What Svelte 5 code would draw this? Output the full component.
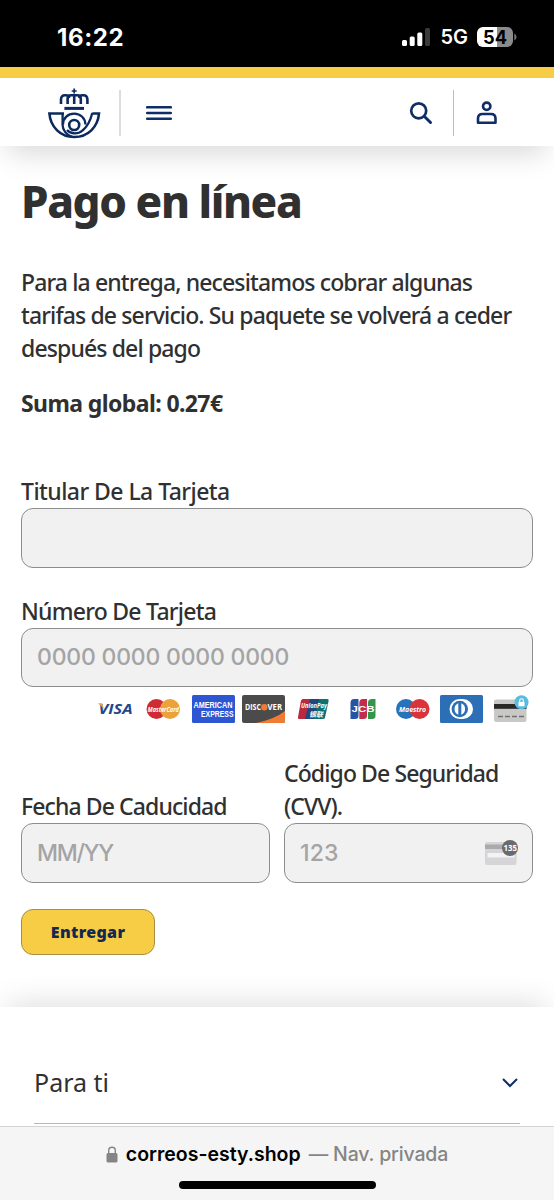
<script>
	const fields = [
		{ id: 'holder', label: 'Titular De La Tarjeta', hint: '' },
		{ id: 'number', label: 'Número De Tarjeta', hint: '0000 0000 0000 0000' }
	];

	const bars = [
		{ x: 0, y: 12, h: 6, on: true },
		{ x: 7.7, y: 8.5, h: 9.5, on: true },
		{ x: 15.3, y: 4.5, h: 13.5, on: true },
		{ x: 23, y: 0, h: 18, on: false }
	];
</script>

<div class="screen">
	<div class="status-bar">
		<span class="clock">16:22</span>
		<div class="status-right">
			<svg class="signal" width="28" height="18" viewBox="0 0 28 18">
				{#each bars as bar}
					<rect x={bar.x} y={bar.y} width="5" height={bar.h} rx="1.5" fill={bar.on ? '#fff' : '#3a3a3a'} />
				{/each}
			</svg>
			<span class="network">5G</span>
			<svg width="40" height="20" viewBox="0 0 40 20">
				<path d="M6 0H20V20H6A6 6 0 0 1 0 14V6A6 6 0 0 1 6 0Z" fill="#fff" />
				<path d="M20 0H30A6 6 0 0 1 36 6V14A6 6 0 0 1 30 20H20Z" fill="#8b8b8b" />
				<path d="M37.3 6.5Q39.5 7.5 39.5 10T37.3 13.5Z" fill="#777" />
				<text x="18" y="16.6" text-anchor="middle" textLength="24" lengthAdjust="spacingAndGlyphs" font-family="Inter" font-size="18.5" font-weight="700">54</text>
			</svg>
		</div>
	</div>

	<header class="header">
		<svg class="logo" width="54" height="52" viewBox="0 0 54 52" fill="none" stroke="#0c2a5e" stroke-width="2.6">
			<path d="M27.200 1.500V6.500M24.700 4H29.700" stroke-width="1.700" />
			<path d="M14 17V12.500Q14 8.200 18 8.200H19Q22 8.200 22 11M40.400 17V12.500Q40.400 8.200 36.400 8.200H35.400Q32.400 8.200 32.400 11" />
			<path d="M20.600 17V12Q20.600 8.200 24 8.200H30.400Q33.800 8.200 33.800 12V17M27.200 8V17" />
			<path d="M17.400 21.400H37" stroke-width="3" />
			<path d="M17 26.500H2.400C3.500 40 13.500 50 27.200 50C41 50 50.900 40 52 26.500H45.300" />
			<path d="M15.600 26V38C15.600 43 19.500 48 25 49.800" stroke-width="2.300" />
			<path d="M16 37.500C16 31 21 26.600 27.200 26.600C33.500 26.600 38.400 31.500 38.400 37.500" stroke-width="2.300" />
			<circle cx="27.200" cy="38" r="5" />
			<path d="M20 43C24 47.500 31 47.500 35.500 43.500C41 39 43.500 33.500 45.300 26" stroke-width="2.300" />
		</svg>
		<span class="divider divider-wide"></span>
		<svg class="burger" width="26" height="16" viewBox="0 0 26 16">
			<path d="M1.200 2.300H24.800M1.200 8H24.800M1.200 13.700H24.800" stroke="#0f2d69" stroke-width="2.600" stroke-linecap="round" />
		</svg>
		<svg class="search" width="24" height="24" viewBox="0 0 24 24" fill="none" stroke="#0f2d69" stroke-width="2.700">
			<circle cx="9.700" cy="9.800" r="7.500" />
			<path d="M15.200 15.300L21.500 21.500" stroke-width="3" stroke-linecap="round" />
		</svg>
		<span class="divider"></span>
		<svg class="user" width="22" height="24" viewBox="0 0 22 24" fill="none" stroke="#0f2d69" stroke-width="2.600">
			<circle cx="10.700" cy="5.300" r="3.700" />
			<path d="M2 21.800V17.500Q2 13 6.500 13H15Q19.500 13 19.500 17.500V21.800Z" stroke-linejoin="round" />
		</svg>
	</header>

	<main class="content">
		<h1>Pago en línea</h1>
		<p class="intro">
			Para la entrega, necesitamos cobrar algunas<br />
			tarifas de servicio. Su paquete se volverá a ceder<br />
			después del pago
		</p>
		<p class="total">Suma global: 0.27€</p>

		{#each fields as field}
			<div class="field {field.id}">
				<span class="label">{field.label}</span>
				<div class="box"><span class="hint">{field.hint}</span></div>
			</div>
		{/each}

		<div class="cards">
			<svg viewBox="0 0 43 28">
				<text x="5.500" y="19.300" textLength="34" lengthAdjust="spacingAndGlyphs" font-family="Open Sans" font-size="15" font-weight="700" font-style="italic" fill="#24468b">VISA</text>
				<path d="M5 8.300H9L11 14Z" fill="#e5a63a" />
			</svg>
			<svg viewBox="0 0 43 28">
				<circle cx="14.500" cy="14" r="10" fill="#cf2b32" />
				<circle cx="28" cy="14" r="10" fill="#eda13b" />
				<text x="21.300" y="16.700" text-anchor="middle" textLength="31" lengthAdjust="spacingAndGlyphs" class="brand">MasterCard</text>
			</svg>
			<svg viewBox="0 0 43 28">
				<rect width="43" height="28" rx="1.500" fill="#2c56d2" />
				<g font-family="Liberation Sans" font-size="9" font-weight="700" fill="#fff">
					<text x="1.500" y="13" textLength="39" lengthAdjust="spacingAndGlyphs">AMERICAN</text>
					<text x="9" y="21.500" textLength="32.500" lengthAdjust="spacingAndGlyphs">EXPRESS</text>
				</g>
			</svg>
			<svg viewBox="0 0 43 28">
				<rect width="43" height="28" rx="2" fill="#4b4b4b" />
				<path d="M14 28Q33 24 43 16V26Q43 28 41 28Z" fill="#ef7b35" />
				<g font-family="Open Sans" font-size="8" font-weight="700" fill="#fff">
					<text x="3" y="15.200" textLength="16" lengthAdjust="spacingAndGlyphs">DISC</text>
					<text x="25.500" y="15.200" textLength="14.500" lengthAdjust="spacingAndGlyphs">VER</text>
				</g>
				<circle cx="22.300" cy="12.300" r="3.200" fill="#ef7b35" />
			</svg>
			<svg viewBox="0 0 43 28">
				<path d="M11.500 4H20L15 24H8Q6.500 24 7 22L10 5.500Z" fill="#b92940" />
				<path d="M19 4H29L24 24H14Z" fill="#21477d" />
				<path d="M28 4H36.500Q38 4 37.600 6L34 22.500Q33.600 24 32 24H23Z" fill="#10706f" />
				<text x="23" y="12.500" text-anchor="middle" textLength="26" lengthAdjust="spacingAndGlyphs" class="brand">UnionPay</text>
				<text x="25" y="21.500" text-anchor="middle" textLength="14" lengthAdjust="spacingAndGlyphs" font-family="Noto Sans CJK SC" font-size="7" font-weight="700" font-style="italic" fill="#fff">银联</text>
			</svg>
			<svg viewBox="0 0 43 28">
				<path d="M13 4H17.500V21Q17.500 24 14 24H9.500V8Q9.500 4 13 4Z" fill="#2854a5" />
				<path d="M22 4H26V21Q26 24 22.500 24H18.300V8Q18.300 4 22 4Z" fill="#c32c4a" />
				<path d="M31 4H34.500V21Q34.500 24 31 24H27V8Q27 4 31 4Z" fill="#34964a" />
				<text x="10.500" y="17.300" textLength="23" lengthAdjust="spacingAndGlyphs" font-family="Liberation Sans" font-size="9.500" font-weight="700" fill="#fff">JCB</text>
			</svg>
			<svg viewBox="0 0 43 28">
				<circle cx="15" cy="14" r="10" fill="#2673bb" />
				<circle cx="28.500" cy="14" r="10" fill="#d8343a" />
				<text x="21.500" y="16.500" text-anchor="middle" textLength="27" lengthAdjust="spacingAndGlyphs" class="brand">Maestro</text>
			</svg>
			<svg viewBox="0 0 43 28">
				<rect width="43" height="28" rx="1.500" fill="#2c6fb7" />
				<path d="M19.500 4H23A10 10 0 0 1 23 24H19.500A10 10 0 0 1 19.500 4Z" fill="#fff" />
				<circle cx="19.800" cy="14" r="8.200" fill="#2c6fb7" />
				<path d="M18.300 8.300A6.200 6.200 0 0 0 18.300 19.700ZM21.300 8.300A6.200 6.200 0 0 1 21.300 19.700Z" fill="#fff" />
			</svg>
			<svg viewBox="0 0 43 28">
				<rect x="4" y="4.500" width="32.500" height="22.500" rx="2" fill="#c8c8c6" />
				<rect x="4" y="9" width="32.500" height="4.800" fill="#292929" />
				<path d="M8 21.500H13M15 21.500H20M22 21.500H27M29 21.500H34" stroke="#707070" stroke-width="1.300" />
				<circle cx="31.500" cy="7.300" r="7" fill="#58bce0" />
				<rect x="28.500" y="7" width="6" height="4.200" rx=".5" fill="#fff" />
				<path d="M29.700 7V5.500A1.800 1.800 0 0 1 33.300 5.500V7" fill="none" stroke="#fff" stroke-width="1.100" />
			</svg>
		</div>

		<div class="pair">
			<div class="field expiry">
				<span class="label">Fecha De Caducidad</span>
				<div class="box"><span class="hint">MM/YY</span></div>
			</div>
			<div class="field code">
				<span class="label">Código De Seguridad<br />(CVV).</span>
				<div class="box">
					<span class="hint">123</span>
					<svg class="cvv" width="34" height="28" viewBox="0 0 34 28">
						<rect y="3" width="31.500" height="23" rx="2" fill="#d5d5d7" />
						<rect y="5.500" width="31.500" height="4.500" fill="#aaaaad" />
						<rect x="2.500" y="14" width="27" height="4.500" fill="#f3f3f3" />
						<circle cx="25" cy="9" r="8" fill="#6b6a70" />
						<text x="25.300" y="12.200" text-anchor="middle" textLength="13.500" lengthAdjust="spacingAndGlyphs" font-family="Noto Sans" font-size="9" font-weight="700" fill="#fff">135</text>
					</svg>
				</div>
			</div>
		</div>

		<div class="submit">Entregar</div>
	</main>

	<footer class="footer">
		<div class="accordion">
			<span>Para ti</span>
			<svg width="18" height="12" viewBox="0 0 18 12">
				<path d="M2 2L9 9L16 2" fill="none" stroke="#0f2d69" stroke-width="2" />
			</svg>
		</div>
	</footer>

	<div class="browser-bar">
		<div class="address">
			<svg width="12" height="17" viewBox="0 0 12 17">
				<rect x=".5" y="7" width="11" height="9.500" rx="1.500" fill="#858585" />
				<path d="M2.700 8V4.500A3.300 3.300 0 0 1 9.300 4.500V8" fill="none" stroke="#858585" stroke-width="1.400" />
			</svg>
			<span class="host">correos-esty.shop</span>
			<span class="mode">— Nav. privada</span>
		</div>
		<div class="home-indicator"></div>
	</div>
</div>

<style>
	:global(body) {
		margin: 0;
	}

	.screen {
		width: 554px;
		height: 1200px;
		display: flex;
		flex-direction: column;
		overflow: hidden;
		background: #fff;
		color: #303030;
		font-family: 'Noto Sans', sans-serif;
	}

	.screen > * {
		box-sizing: border-box;
		flex-shrink: 0;
	}

	svg {
		display: block;
		flex-shrink: 0;
	}

	.status-bar {
		height: 67px;
		padding: 7px 37px 0 57px;
		display: flex;
		align-items: center;
		justify-content: space-between;
		background: #000;
		color: #fff;
		font-family: Inter, sans-serif;
	}

	.clock {
		font-size: 24px;
		font-weight: 700;
		letter-spacing: 0.6px;
	}

	.status-right {
		display: flex;
		align-items: center;
	}

	.network {
		margin: 0 9px 0 10px;
		font-size: 20px;
		font-weight: 600;
	}

	.header {
		position: relative;
		height: 79px;
		padding: 1px 56px 0 47px;
		display: flex;
		align-items: center;
		border-top: 11px solid #f7cd46;
		background: #fff;
		box-shadow: 0 16px 28px -8px rgba(0, 0, 0, 0.15);
	}

	.divider {
		width: 1px;
		height: 46px;
		background: #bdbdbd;
	}

	.divider-wide {
		width: 2px;
		margin: 0 25px 0 18px;
		background: #dcdcdc;
	}

	.search {
		margin-left: auto;
		margin-right: 20px;
	}

	.user {
		margin-left: 22px;
	}

	.content {
		height: 861px;
		padding: 26px 21px 0;
	}

	h1 {
		margin: 0;
		font-size: 44px;
		line-height: 58px;
		font-weight: 800;
		letter-spacing: -1.4px;
	}

	p {
		margin: 0;
		font-size: 23px;
		line-height: 33px;
	}

	.intro {
		margin-top: 36px;
		white-space: nowrap;
		font-weight: 500;
		letter-spacing: -0.87px;
	}

	.total {
		margin-top: 22px;
		font-weight: 700;
		letter-spacing: -0.6px;
	}

	.field {
		display: flex;
		flex-direction: column;
	}

	.holder {
		margin-top: 55px;
	}

	.number {
		margin-top: 27px;
	}

	.label {
		font-size: 23px;
		line-height: 33px;
		font-weight: 500;
		white-space: nowrap;
		letter-spacing: -0.55px;
	}

	.number .label {
		letter-spacing: -0.75px;
	}

	.expiry .label,
	.code .label {
		letter-spacing: -0.9px;
	}

	.box {
		box-sizing: border-box;
		height: 59.5px;
		padding: 0 13px 0 15px;
		display: flex;
		align-items: center;
		justify-content: space-between;
		border: 1px solid #8d8d8d;
		border-radius: 12px;
		background: #f1f1f1;
	}

	.hint {
		color: #a4a4a4;
		font-family: Inter, sans-serif;
		font-size: 23px;
		font-weight: 500;
		letter-spacing: -0.2px;
	}

	.expiry .hint {
		letter-spacing: -1.3px;
	}

	.code .hint {
		letter-spacing: 0.2px;
	}

	.cards {
		margin-top: 8px;
		display: flex;
		justify-content: flex-end;
		gap: 6.7px;
	}

	.cards svg {
		width: 43px;
		height: 28px;
	}

	.brand {
		font-family: 'Open Sans', sans-serif;
		font-size: 7px;
		font-weight: 700;
		font-style: italic;
		fill: #fff;
	}

	.pair {
		margin-top: 34px;
		display: grid;
		grid-template-columns: 1fr 1fr;
		gap: 14px;
		align-items: end;
	}

	.submit {
		box-sizing: border-box;
		width: 134px;
		height: 46px;
		margin-top: 26px;
		display: flex;
		align-items: center;
		justify-content: center;
		border: 1px solid #a78f43;
		border-radius: 12px;
		background: #f7cd46;
		color: #14294f;
		font-size: 16px;
		font-weight: 900;
		letter-spacing: 0.35px;
	}

	.footer {
		height: 119px;
		padding: 50px 34px 0;
		background: #fff;
		box-shadow: 0 -12px 28px -8px rgba(0, 0, 0, 0.13);
	}

	.accordion {
		height: 66px;
		padding-right: 1px;
		display: flex;
		align-items: flex-start;
		justify-content: space-between;
		border-bottom: 1px solid #b9b9b9;
		font-size: 25px;
		line-height: 50px;
		letter-spacing: 0;
	}

	.accordion svg {
		margin-top: 20px;
	}

	.browser-bar {
		position: relative;
		height: 74px;
		padding-top: 12px;
		display: flex;
		flex-direction: column;
		align-items: center;
		border-top: 1px solid #d3d3d3;
		background: #f5f5f5;
		font-family: Inter, sans-serif;
		font-size: 19.5px;
		line-height: 30px;
	}

	.address {
		display: flex;
		align-items: center;
	}

	.host {
		margin: 0 8px;
		color: #000;
		font-weight: 600;
	}

	.mode {
		color: #858585;
		font-weight: 500;
		letter-spacing: -0.15px;
	}

	.home-indicator {
		width: 197px;
		height: 8px;
		margin-top: 12px;
		border-radius: 4px;
		background: #000;
	}
</style>
